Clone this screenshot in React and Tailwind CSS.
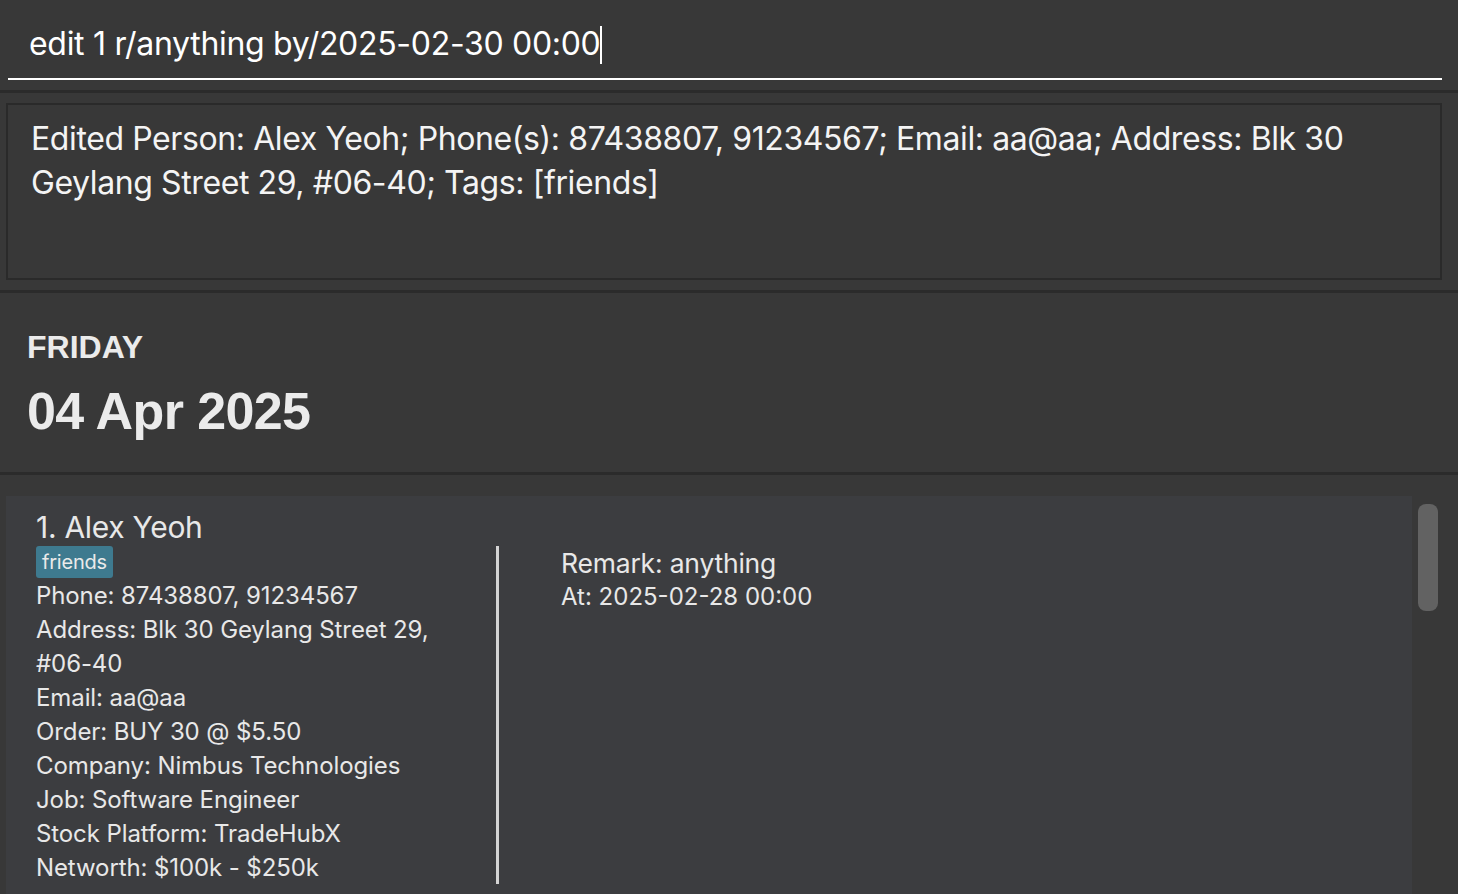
export default function App() {
  const details = [
    "Phone: 87438807, 91234567",
    "Address: Blk 30 Geylang Street 29, #06-40",
    "Email: aa@aa",
    "Order: BUY 30 @ $5.50",
    "Company: Nimbus Technologies",
    "Job: Software Engineer",
    "Stock Platform: TradeHubX",
    "Networth: $100k - $250k",
  ];

  return (
    <div className="w-[1458px] h-[894px] overflow-hidden bg-[#383838] flex flex-col font-['Inter','Noto_Sans',sans-serif]">
      {/* Command box */}
      <div className="h-[90px] pl-2 pr-4 pt-[22px] shrink-0">
        <div className="border-b-2 border-white h-[58px] pl-[21px] flex items-start">
          <span className="text-[32px] leading-[44px] text-white tracking-[-0.3px]">
            edit 1 r/anything by/2025-02-30 00:00
          </span>
          <span className="w-[2px] h-[38px] bg-white mt-[4px]"></span>
        </div>
      </div>
      <div className="h-[3px] bg-[#2b2b2b] shrink-0"></div>

      {/* Result display */}
      <div className="h-[197px] pt-[10px] pl-[6px] pr-[16px] shrink-0">
        <div className="h-[177px] border-2 border-[#2a2a2a] bg-[#383838] px-[23px] pt-[12px]">
          <p className="text-[32px] leading-[44px] text-[#f4f4f4] tracking-[-0.4px]">
            Edited Person: Alex Yeoh; Phone(s): 87438807, 91234567; Email: aa@aa; Address: Blk 30 Geylang Street 29, #06-40; Tags: [friends]
          </p>
        </div>
      </div>
      <div className="h-[3px] bg-[#2b2b2b] shrink-0"></div>

      {/* Date */}
      <div className="h-[179px] pl-[27px] pt-[34px] shrink-0 font-['Liberation_Sans',Arial,sans-serif] font-bold text-[#ebebeb]">
        <div className="text-[32px] leading-[40px]">FRIDAY</div>
        <div className="text-[52px] leading-[60px] mt-[14px] tracking-[-0.6px]">04 Apr 2025</div>
      </div>
      <div className="h-[3px] bg-[#2b2b2b] shrink-0"></div>

      {/* List */}
      <div className="flex-1 flex pt-[21px] pl-[6px] min-h-0">
        <div className="w-[1406px] bg-[#3c3d40] pl-[30px] pt-[13px] text-[#e8e8e8]">
          <div className="text-[30px] leading-[37px] tracking-[-0.3px]">1. Alex Yeoh</div>
          <div className="flex">
            <div className="w-[440px]">
              <span className="inline-block bg-[#3e7a8f] text-[#eaeaea] text-[20px] leading-[32px] px-[6px] rounded-[3px] h-[32px] tracking-[-0.2px]">
                friends
              </span>
              <div className="mt-[1px] text-[24px] leading-[34px] tracking-[-0.1px]">
                {details.map((d) => (
                  <div key={d}>{d}</div>
                ))}
              </div>
            </div>
            <div className="ml-[20px] w-[3px] h-[338px] bg-[#d4d4d4]"></div>
            <div className="ml-[62px] pt-[1px]">
              <div className="text-[26.5px] leading-[33px] tracking-[-0.2px]">Remark: anything</div>
              <div className="text-[24px] leading-[34px]">At: 2025-02-28 00:00</div>
            </div>
          </div>
        </div>
        <div className="ml-[6px] pt-[8px]">
          <div className="w-[20px] h-[107px] rounded-lg bg-[#626262]"></div>
        </div>
      </div>
    </div>
  );
}
